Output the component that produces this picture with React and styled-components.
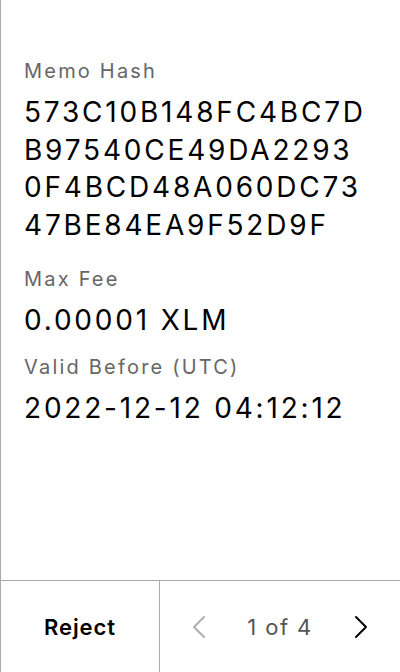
import React from "react";
import styled, { createGlobalStyle } from "styled-components";

const Global = createGlobalStyle`
  html, body { margin: 0; padding: 0; background: #fff; }
  body { font-family: Inter, "Noto Sans", sans-serif; -webkit-font-smoothing: antialiased; }
  * { box-sizing: border-box; }
`;

const Screen = styled.div`
  width: 400px;
  height: 672px;
  display: flex;
  flex-direction: column;
  border-left: 1px solid #a9a9a9;
  background: #fff;
`;

const Body = styled.div`
  flex: 1;
  display: flex;
  flex-direction: column;
  padding: 57px 23px 0 23px;
`;

const Field = styled.div`
  display: flex;
  flex-direction: column;
  gap: 9px;
  margin-bottom: ${(p) => p.$after}px;
`;

const Label = styled.div`
  font-size: 20px;
  line-height: 28px;
  letter-spacing: 2.2px;
  color: #666;
  font-weight: 400;
`;

const Value = styled.div`
  font-size: 28px;
  line-height: 37.5px;
  letter-spacing: 2.8px;
  color: #000;
  font-weight: 400;
`;

const Line = styled.span`
  display: block;
  white-space: nowrap;
`;

const Footer = styled.div`
  height: 92px;
  border-top: 1px solid #a9a9a9;
  display: grid;
  grid-template-columns: 159px 1fr;
`;

const RejectButton = styled.button`
  border: none;
  border-right: 1px solid #a9a9a9;
  background: transparent;
  font-family: inherit;
  font-size: 22px;
  font-weight: 600;
  letter-spacing: 0.9px;
  color: #000;
  padding: 0;
  cursor: pointer;
`;

const Pager = styled.div`
  display: flex;
  align-items: center;
  justify-content: space-between;
  padding: 0 32px;
`;

const NavButton = styled.button`
  border: none;
  background: transparent;
  padding: 0;
  width: 14px;
  height: 24px;
  display: flex;
  align-items: center;
  justify-content: center;
  color: ${(p) => (p.disabled ? "#b0b0b0" : "#000")};
`;

const PageText = styled.span`
  font-size: 22px;
  letter-spacing: 1.4px;
  color: #555;
  font-weight: 400;
`;

const Chevron = ({ dir }) => (
  <svg width="14" height="24" viewBox="0 0 14 24" fill="none">
    <polyline
      points={dir === "left" ? "12,2 2,12 12,22" : "2,2 12,12 2,22"}
      stroke="currentColor"
      strokeWidth="2"
      strokeLinecap="round"
      strokeLinejoin="round"
    />
  </svg>
);

const hashLines = [
  "573C10B148FC4BC7D",
  "B97540CE49DA2293",
  "0F4BCD48A060DC73",
  "47BE84EA9F52D9F",
];

export default function App() {
  return (
    <>
      <Global />
      <Screen>
        <Body>
          <Field $after={21}>
            <Label>Memo Hash</Label>
            <Value>
              {hashLines.map((l) => (
                <Line key={l}>{l}</Line>
              ))}
            </Value>
          </Field>
          <Field $after={13}>
            <Label>Max Fee</Label>
            <Value>0.00001 XLM</Value>
          </Field>
          <Field $after={0}>
            <Label>Valid Before (UTC)</Label>
            <Value>2022-12-12 04:12:12</Value>
          </Field>
        </Body>
        <Footer>
          <RejectButton>Reject</RejectButton>
          <Pager>
            <NavButton disabled>
              <Chevron dir="left" />
            </NavButton>
            <PageText>1 of 4</PageText>
            <NavButton>
              <Chevron dir="right" />
            </NavButton>
          </Pager>
        </Footer>
      </Screen>
    </>
  );
}
